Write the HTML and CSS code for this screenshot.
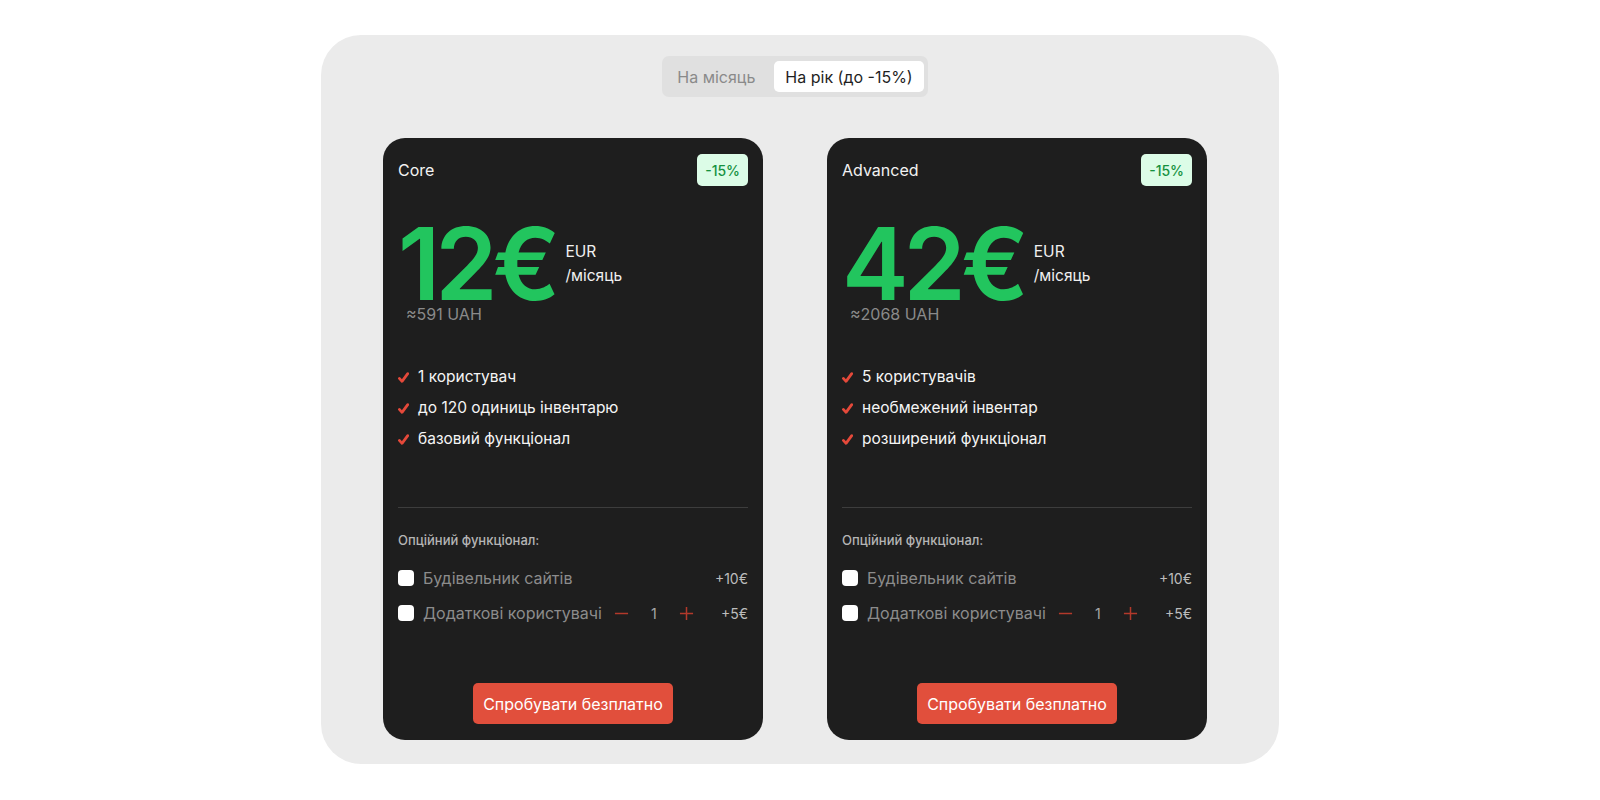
FILE: index.html
```html
<!DOCTYPE html>
<html lang="uk">
<head>
<meta charset="utf-8">
<title>Тарифи</title>
<link rel="stylesheet" href="styles.css">
</head>
<body>
<section class="pricing">
  <div class="toggle">
    <button class="tab">На місяць</button>
    <button class="tab tab-active">На рік (до -15%)</button>
  </div>
  <div class="cards">
    <article class="card">
      <header class="card-head">
        <span class="plan">Core</span>
        <span class="badge">-15%</span>
      </header>
      <div class="price-row">
        <div class="price-col">
          <div class="price">12€</div>
          <div class="uah">≈591 UAH</div>
        </div>
        <div class="units"><span>EUR</span><span>/місяць</span></div>
      </div>
      <ul class="features">
        <li><svg class="check" viewBox="0 0 12 12"><path d="M1.5 7 L4.4 10.2 L10.6 1.8" /></svg>1 користувач</li>
        <li><svg class="check" viewBox="0 0 12 12"><path d="M1.5 7 L4.4 10.2 L10.6 1.8" /></svg>до 120 одиниць інвентарю</li>
        <li><svg class="check" viewBox="0 0 12 12"><path d="M1.5 7 L4.4 10.2 L10.6 1.8" /></svg>базовий функціонал</li>
      </ul>
      <hr class="divider">
      <div class="opt-title">Опційний функціонал:</div>
      <div class="opt-row">
        <label class="opt-label"><input type="checkbox" class="cb">Будівельник сайтів</label>
        <span class="opt-price">+10€</span>
      </div>
      <div class="opt-row">
        <label class="opt-label"><input type="checkbox" class="cb">Додаткові користувачі</label>
        <span class="stepper">
          <svg class="step" viewBox="0 0 16 16"><path d="M1 8 H15"/></svg>
          <span class="qty">1</span>
          <svg class="step" viewBox="0 0 16 16"><path d="M1 8 H15 M8 1 V15"/></svg>
        </span>
        <span class="opt-price">+5€</span>
      </div>
      <button class="cta">Спробувати безплатно</button>
    </article>
    <article class="card">
      <header class="card-head">
        <span class="plan">Advanced</span>
        <span class="badge">-15%</span>
      </header>
      <div class="price-row">
        <div class="price-col">
          <div class="price">42€</div>
          <div class="uah">≈2068 UAH</div>
        </div>
        <div class="units"><span>EUR</span><span>/місяць</span></div>
      </div>
      <ul class="features">
        <li><svg class="check" viewBox="0 0 12 12"><path d="M1.5 7 L4.4 10.2 L10.6 1.8" /></svg>5 користувачів</li>
        <li><svg class="check" viewBox="0 0 12 12"><path d="M1.5 7 L4.4 10.2 L10.6 1.8" /></svg>необмежений інвентар</li>
        <li><svg class="check" viewBox="0 0 12 12"><path d="M1.5 7 L4.4 10.2 L10.6 1.8" /></svg>розширений функціонал</li>
      </ul>
      <hr class="divider">
      <div class="opt-title">Опційний функціонал:</div>
      <div class="opt-row">
        <label class="opt-label"><input type="checkbox" class="cb">Будівельник сайтів</label>
        <span class="opt-price">+10€</span>
      </div>
      <div class="opt-row">
        <label class="opt-label"><input type="checkbox" class="cb">Додаткові користувачі</label>
        <span class="stepper">
          <svg class="step" viewBox="0 0 16 16"><path d="M1 8 H15"/></svg>
          <span class="qty">1</span>
          <svg class="step" viewBox="0 0 16 16"><path d="M1 8 H15 M8 1 V15"/></svg>
        </span>
        <span class="opt-price">+5€</span>
      </div>
      <button class="cta">Спробувати безплатно</button>
    </article>
  </div>
</section>
</body>
</html>
```
FILE: styles.css
```css
* { box-sizing: border-box; }
html, body { margin: 0; padding: 0; background: #ffffff; }
body {
  font-family: Inter, "Noto Sans", "Liberation Sans", sans-serif;
  color: #ffffff;
}
.pricing {
  width: 958px;
  height: 729px;
  margin: 35px auto 0;
  padding: 21px 72px 24px 62px;
  background: #ebebeb;
  border-radius: 40px;
  display: flex;
  flex-direction: column;
  align-items: center;
}
.toggle {
  display: flex;
  gap: 8px;
  padding: 5px 4px;
  background: #e0e0e0;
  border-radius: 7px;
}
.tab {
  height: 31px;
  padding: 0 11px;
  border: 0;
  background: transparent;
  font-family: inherit;
  font-size: 16px;
  color: #8a8a8a;
  border-radius: 5px;
}
.tab-active {
  background: #ffffff;
  color: #1f1f1f;
}
.cards {
  margin-top: 41px;
  display: flex;
  gap: 64px;
}
.card {
  width: 380px;
  height: 602px;
  background: #1e1e1e;
  border-radius: 22px;
  padding: 16px 15px 16px 15px;
  display: flex;
  flex-direction: column;
}
.card-head {
  display: flex;
  justify-content: space-between;
  align-items: center;
  height: 32px;
}
.plan { font-size: 16px; color: #f2f2f2; }
.badge {
  height: 32px;
  padding: 0 8px;
  display: flex;
  align-items: center;
  background: #dcfce7;
  color: #15913f;
  font-size: 14px;
  font-weight: 500;
  border-radius: 5px;
}
.price-row {
  margin-top: 38px;
  display: flex;
  align-items: flex-start;
  gap: 10px;
}
.price-col { display: flex; flex-direction: column; }
.price {
  font-size: 100px;
  line-height: 80px;
  font-weight: 600;
  letter-spacing: -5px;
  color: #22c55e;
}
.uah {
  margin-left: 8px;
  font-size: 16px;
  line-height: 20px;
  color: #8a8a8a;
}
.units {
  margin-top: 16px;
  display: flex;
  flex-direction: column;
  font-size: 15.5px;
  line-height: 24px;
  color: #f0f0f0;
}
.features {
  list-style: none;
  margin: 42px 0 0;
  padding: 0;
  display: flex;
  flex-direction: column;
  gap: 9px;
  font-size: 15.5px;
  line-height: 22px;
  color: #f5f5f5;
}
.features li { display: flex; align-items: center; }
.check {
  width: 11px;
  height: 11px;
  margin-right: 9px;
  fill: none;
  stroke: #e5493a;
  stroke-width: 3;
  stroke-linecap: round;
  stroke-linejoin: round;
}
.divider {
  margin: 57px 0 0;
  border: 0;
  height: 1px;
  background: #3d3d3d;
}
.opt-title {
  margin-top: 23px;
  font-size: 13px;
  line-height: 18px;
  font-weight: 500;
  color: #b5b5b5;
}
.opt-row {
  margin-top: 17px;
  height: 24px;
  display: flex;
  align-items: center;
}
.opt-row + .opt-row { margin-top: 11px; }
.opt-label {
  display: flex;
  align-items: center;
  font-size: 16px;
  color: #8c8c8c;
}
.cb {
  appearance: none;
  -webkit-appearance: none;
  width: 16px;
  height: 16px;
  margin: 0 9px 0 0;
  background: #ffffff;
  border-radius: 4px;
}
.stepper {
  display: flex;
  align-items: center;
  margin-left: 12px;
}
.step {
  width: 15px;
  height: 15px;
  fill: none;
  stroke: #b3392b;
  stroke-width: 1.6;
}
.qty {
  width: 50px;
  text-align: center;
  font-size: 14px;
  color: #a8a8a8;
}
.opt-price {
  margin-left: auto;
  font-size: 14px;
  color: #bcbcbc;
}
.cta {
  margin: auto auto 0;
  width: 200px;
  height: 41px;
  border: 0;
  border-radius: 5px;
  background: #e14f3c;
  color: #ffffff;
  font-family: inherit;
  font-size: 16px;
}
```
